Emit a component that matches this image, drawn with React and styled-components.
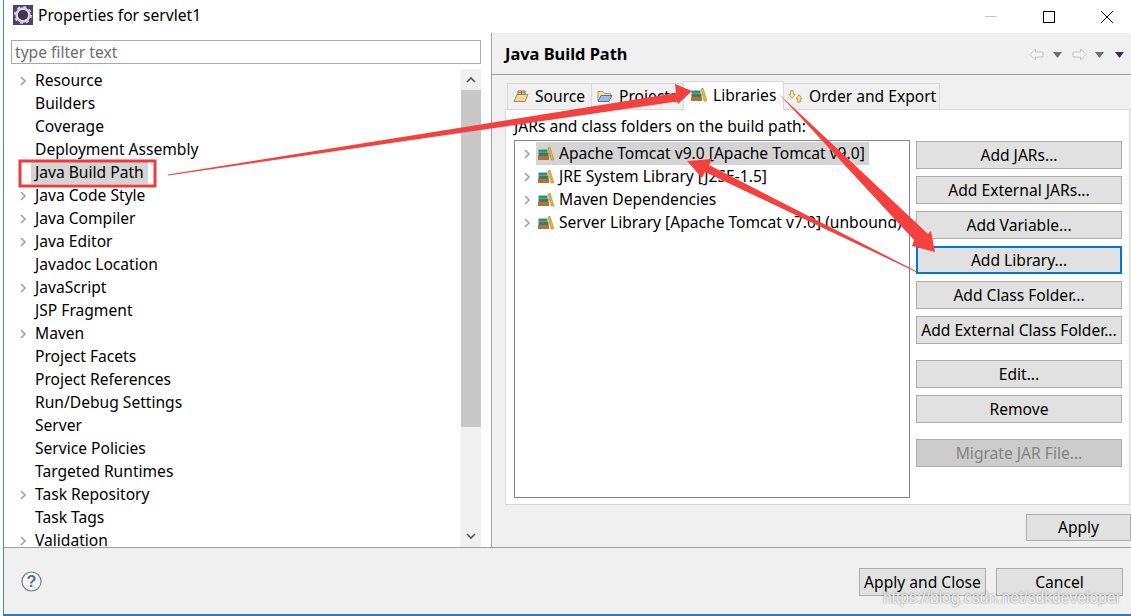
import React from 'react'
import styled, { createGlobalStyle } from 'styled-components'

const GlobalStyle = createGlobalStyle`
  html, body { margin: 0; padding: 0; background: #fff; overflow: hidden; }
  body { font-family: "Noto Sans", "Open Sans", sans-serif; font-size: 15.6px; color: #000; }
`

const Page = styled.div`
  position: relative;
  width: 1131px;
  height: 616px;
  padding-left: 3px;
  box-sizing: border-box;
  overflow: hidden;
`
const Window = styled.div`
  height: 616px;
  box-sizing: border-box;
  border-left: 1px solid #3d8cc4;
  border-bottom: 2px solid #2b7fc0;
  display: flex;
  flex-direction: column;
`
const TitleBar = styled.div`
  height: 33px;
  flex: none;
  display: flex;
  align-items: center;
  padding: 0 18px 4px 9px;
  box-sizing: border-box;
  background: #fff;
`
const TitleText = styled.div`
  margin-left: 5px;
  flex: 1;
`
const WinButtons = styled.div`
  display: flex;
  align-items: center;
  gap: 46px;
  padding-top: 4px;
`
const Main = styled.div`
  flex: 1;
  min-height: 0;
  display: flex;
`
const LeftPane = styled.div`
  width: 488px;
  flex: none;
  box-sizing: border-box;
  padding: 7px 10px 0 7px;
  display: flex;
  flex-direction: column;
  background: #fff;
  border-right: 1px solid #a0a0a0;
`
const FilterInput = styled.div`
  height: 24px;
  flex: none;
  box-sizing: border-box;
  border: 1px solid #a9a9a9;
  padding-left: 3px;
  line-height: 22px;
  color: #6d6d6d;
`
const TreeWrap = styled.div`
  flex: 1;
  min-height: 0;
  margin-top: 5px;
  display: flex;
  overflow: hidden;
`
const Tree = styled.div`
  flex: 1;
`
const TreeRow = styled.div`
  height: 23px;
  display: flex;
  align-items: center;
  padding-left: 9px;
`
const ChevronSlot = styled.div`
  width: 15px;
  flex: none;
  display: flex;
  align-items: center;
`
const RowLabel = styled.div`
  white-space: nowrap;
  line-height: 22px;
  padding: 0 4px 1px ${({ $selected }) => ($selected ? '4px' : '0')};
  margin-left: ${({ $selected }) => ($selected ? '-4px' : '0')};
  background: ${({ $selected }) => ($selected ? '#d4d4d4' : 'transparent')};
`
const Scrollbar = styled.div`
  width: 20px;
  flex: none;
  background: #f0f0f0;
  display: flex;
  flex-direction: column;
`
const ScrollArrow = styled.div`
  height: 21px;
  flex: none;
  display: flex;
  align-items: center;
  justify-content: center;
`
const ScrollThumb = styled.div`
  height: 337px;
  flex: none;
  background: #c8c8c8;
`
const ScrollGap = styled.div`
  flex: 1;
`
const RightPane = styled.div`
  flex: 1;
  min-width: 0;
  background: #f0f0f0;
  display: flex;
  flex-direction: column;
`
const Header = styled.div`
  height: 42px;
  flex: none;
  display: flex;
  align-items: center;
  justify-content: space-between;
  padding: 0 7px 0 13px;
  box-sizing: border-box;
  border-bottom: 1px solid #a0a0a0;
`
const HeaderTitle = styled.div`
  font-weight: 700;
  font-size: 16.4px;
`
const NavIcons = styled.div`
  display: flex;
  align-items: center;
  padding-top: 2px;
`
const TabBar = styled.div`
  height: 34px;
  flex: none;
  display: flex;
  align-items: flex-end;
  padding-left: 16px;
`
const Tab = styled.div`
  height: ${({ $active }) => ($active ? '29px' : '26px')};
  width: ${({ $w }) => $w}px;
  box-sizing: border-box;
  display: flex;
  align-items: center;
  padding: 0 0 ${({ $active }) => ($active ? '3px' : '1px')} ${({ $pad }) => $pad}px;
  gap: 6px;
  white-space: nowrap;
  background: ${({ $active }) => ($active ? '#fff' : '#f0f0f0')};
  border: 1px solid #d9d9d9;
  border-bottom: none;
  margin-left: -1px;
  margin-bottom: ${({ $active }) => ($active ? '-1px' : '0')};
  position: relative;
  z-index: ${({ $active }) => ($active ? 1 : 0)};
`
const Panel = styled.div`
  height: 396px;
  flex: none;
  margin: 0 1px 0 13px;
  box-sizing: border-box;
  background: #fff;
  border: 1px solid #d9d9d9;
  padding: 5px 7px 0 8px;
  display: flex;
  flex-direction: column;
`
const PanelLabel = styled.div`
  height: 25px;
  line-height: 22px;
  flex: none;
`
const PanelBody = styled.div`
  display: flex;
  gap: 6px;
  height: 358px;
`
const LibList = styled.div`
  width: 396px;
  flex: none;
  box-sizing: border-box;
  border: 1px solid #828790;
  padding: 1px 0 0 7px;
`
const LibRow = styled.div`
  height: 23px;
  display: flex;
  align-items: center;
`
const LibChevron = styled.div`
  width: 14px;
  flex: none;
  display: flex;
  align-items: center;
  padding-left: 2px;
  box-sizing: border-box;
`
const LibSelect = styled.div`
  display: flex;
  align-items: center;
  height: 23px;
  padding: 0 4px 0 2px;
  background: ${({ $selected }) => ($selected ? '#d4d4d4' : 'transparent')};
  white-space: nowrap;
`
const LibLabel = styled.span`
  margin-left: 5px;
  line-height: 22px;
  padding-bottom: 2px;
`
const ButtonColumn = styled.div`
  width: 206px;
  flex: none;
  display: flex;
  flex-direction: column;
  padding-top: 1px;
`
const Btn = styled.div`
  height: ${({ $h }) => $h ?? 28}px;
  flex: none;
  box-sizing: border-box;
  background: ${({ $disabled }) => ($disabled ? '#cccccc' : '#e1e1e1')};
  color: ${({ $disabled }) => ($disabled ? '#838383' : '#000')};
  border: ${({ $focus }) => ($focus ? '2px solid #0078d7' : '1px solid #adadad')};
  margin-top: ${({ $top }) => $top ?? 7}px;
  width: ${({ $w }) => ($w ? `${$w}px` : 'auto')};
  padding-bottom: 1px;
  display: flex;
  align-items: center;
  justify-content: center;
  white-space: nowrap;
`
const ApplyRow = styled.div`
  flex: none;
  display: flex;
  justify-content: flex-end;
  padding-top: 2px;
`
const Footer = styled.div`
  flex: none;
  height: 67px;
  box-sizing: border-box;
  background: #f0f0f0;
  border-top: 1px solid #a0a0a0;
  display: flex;
  align-items: flex-start;
  justify-content: space-between;
  padding: 20px 8px 0 16px;
`
const HelpSlot = styled.div`
  padding: 3px 0 0 1px;
`
const FooterButtons = styled.div`
  display: flex;
  gap: 10px;
`
const Watermark = styled.div`
  position: absolute;
  right: 10px;
  bottom: 9px;
  font-family: "Liberation Sans", sans-serif;
  font-size: 15.7px;
  line-height: 18px;
  color: rgba(255, 255, 255, 0.82);
  text-shadow: 0 0 2px rgba(70, 70, 70, 0.7);
`
const Annotations = styled.svg`
  position: absolute;
  left: 0;
  top: 0;
  z-index: 2;
  pointer-events: none;
`

const Chevron = () => (
  <svg width="7" height="10" viewBox="0 0 7 10">
    <path d="M1 1l4 4-4 4" fill="none" stroke="#a2a2a2" strokeWidth="1.6" />
  </svg>
)

const LibIcon = () => (
  <svg width="16" height="14" viewBox="0 0 16 14" style={{ flex: 'none' }}>
    <rect x="0.5" y="2.5" width="9" height="3" fill="#2f8f83" />
    <rect x="0.5" y="5.5" width="10" height="3.5" fill="#3d7f4e" />
    <rect x="0" y="9" width="11" height="4" fill="#b5703c" />
    <path d="M10 1l2-1 4 13h-3z" fill="#e7b23f" stroke="#a97d23" strokeWidth="0.5" />
  </svg>
)

const SourceIcon = () => (
  <svg width="16" height="14" viewBox="0 0 16 14" style={{ flex: 'none' }}>
    <path d="M1 12.5l3-7h11l-3 7z" fill="#f3d9a0" stroke="#a98550" />
    <path d="M5 5.5V2h7v3.5M8.5 2v3.5M5 3.8h7" fill="none" stroke="#8a6a3f" />
  </svg>
)

const FolderIcon = () => (
  <svg width="16" height="14" viewBox="0 0 16 14" style={{ flex: 'none' }}>
    <path d="M1 12V2.5h5l1.5 2h6V7" fill="#f5dea6" stroke="#b39a5c" />
    <path d="M1 12.5l3-6h11l-3 6z" fill="#9dbbe2" stroke="#4f77ab" />
  </svg>
)

const OrderIcon = () => (
  <svg width="15" height="15" viewBox="0 0 17 15" style={{ flex: 'none' }}>
    <path d="M3 1h3v4h2L4.500 9.500 1 5h2z" fill="#fbefc0" stroke="#b3923f" />
    <path d="M11 14h3v-4h2l-3.500-4.500L9 10h2z" fill="#fbe39a" stroke="#c09530" />
  </svg>
)

const GearIcon = () => (
  <svg width="20" height="20" viewBox="0 0 20 20" style={{ flex: 'none' }}>
    <rect width="20" height="20" fill="#4d3f75" />
    <circle cx="10" cy="10" r="6.400" fill="none" stroke="#d5d5da" strokeWidth="2.600" />
    <circle cx="10" cy="10" r="8" fill="none" stroke="#d5d5da" strokeWidth="2" strokeDasharray="3 3.300" />
    <circle cx="10" cy="10" r="4.800" fill="#3e3550" />
  </svg>
)

const NavArrow = ({ flip, m }) => (
  <svg width="15" height="13" viewBox="0 0 15 13" style={{ marginLeft: m, transform: flip ? 'scaleX(-1)' : 'none' }}>
    <path d="M6.500 1L1 6.500 6.500 12V9h7.500V4H6.500z" fill="#f4f4f4" stroke="#c4c4c4" />
  </svg>
)

const NavCaret = ({ color = '#6f6f6f', m }) => (
  <svg width="9" height="6" viewBox="0 0 9 6" style={{ marginLeft: m }}>
    <path d="M0 0h9L4.500 6z" fill={color} />
  </svg>
)

const HelpIcon = () => (
  <svg width="21" height="21" viewBox="0 0 22 22">
    <circle cx="11" cy="11" r="10" fill="#f6f7f9" stroke="#6c7c9b" strokeWidth="1.200" />
    <text x="11" y="17" textAnchor="middle" fontFamily="Liberation Sans" fontWeight="700" fontSize="17" fill="#5a6b8c">?</text>
  </svg>
)

const treeItems = [
  ['Resource', true], ['Builders'], ['Coverage'], ['Deployment Assembly'],
  ['Java Build Path', false, true], ['Java Code Style', true], ['Java Compiler', true],
  ['Java Editor', true], ['Javadoc Location'], ['JavaScript', true], ['JSP Fragment'],
  ['Maven', true], ['Project Facets'], ['Project References'], ['Run/Debug Settings'],
  ['Server'], ['Service Policies'], ['Targeted Runtimes'], ['Task Repository', true],
  ['Task Tags'], ['Validation', true],
]

const libs = [
  'Apache Tomcat v9.0 [Apache Tomcat v9.0]',
  'JRE System Library [J2SE-1.5]',
  'Maven Dependencies',
  'Server Library [Apache Tomcat v7.0] (unbound)',
]

const sideButtons = [
  { label: 'Add JARs...', top: 0 },
  { label: 'Add External JARs...' },
  { label: 'Add Variable...' },
  { label: 'Add Library...', focus: true },
  { label: 'Add Class Folder...' },
  { label: 'Add External Class Folder...' },
  { label: 'Edit...', top: 16 },
  { label: 'Remove' },
  { label: 'Migrate JAR File...', top: 16, disabled: true },
]

const App = () => {
  return (
    <Page>
      <GlobalStyle />
      <Window>
        <TitleBar>
          <GearIcon />
          <TitleText>Properties for servlet1</TitleText>
          <WinButtons>
            <svg width="12" height="12" viewBox="0 0 12 12"><path d="M0 5.500h12" stroke="#c8c8c8" /></svg>
            <svg width="12" height="12" viewBox="0 0 12 12"><rect x="0.500" y="0.500" width="11" height="11" fill="none" stroke="#000" /></svg>
            <svg width="12" height="12" viewBox="0 0 12 12"><path d="M0 0l12 12M12 0L0 12" stroke="#000" /></svg>
          </WinButtons>
        </TitleBar>
        <Main>
          <LeftPane>
            <FilterInput>type filter text</FilterInput>
            <TreeWrap>
              <Tree>
                {treeItems.map(([label, expandable, selected]) => (
                  <TreeRow key={label}>
                    <ChevronSlot>{expandable && <Chevron />}</ChevronSlot>
                    <RowLabel $selected={selected}>{label}</RowLabel>
                  </TreeRow>
                ))}
              </Tree>
              <Scrollbar>
                <ScrollArrow>
                  <svg width="10" height="7" viewBox="0 0 10 7"><path d="M1 6l4-4 4 4" fill="none" stroke="#555" strokeWidth="1.600" /></svg>
                </ScrollArrow>
                <ScrollThumb />
                <ScrollGap />
                <ScrollArrow>
                  <svg width="10" height="7" viewBox="0 0 10 7"><path d="M1 1l4 4 4-4" fill="none" stroke="#555" strokeWidth="1.600" /></svg>
                </ScrollArrow>
              </Scrollbar>
            </TreeWrap>
          </LeftPane>
          <RightPane>
            <Header>
              <HeaderTitle>Java Build Path</HeaderTitle>
              <NavIcons>
                <NavArrow />
                <NavCaret m="9px" />
                <NavArrow flip m="10px" />
                <NavCaret m="8px" />
                <NavCaret color="#3d2a66" m="11px" />
              </NavIcons>
            </Header>
            <TabBar>
              <Tab $w={85} $pad={5}><SourceIcon />Source</Tab>
              <Tab $w={93} $pad={5}><FolderIcon />Projects</Tab>
              <Tab $w={101} $pad={7} $active><LibIcon />Libraries</Tab>
              <Tab $w={157} $pad={4}><OrderIcon />Order and Export</Tab>
            </TabBar>
            <Panel>
              <PanelLabel>JARs and class folders on the build path:</PanelLabel>
              <PanelBody>
                <LibList>
                  {libs.map((lib, i) => (
                    <LibRow key={lib}>
                      <LibChevron><Chevron /></LibChevron>
                      <LibSelect $selected={i === 0}>
                        <LibIcon />
                        <LibLabel>{lib}</LibLabel>
                      </LibSelect>
                    </LibRow>
                  ))}
                </LibList>
                <ButtonColumn>
                  {sideButtons.map((b) => (
                    <Btn key={b.label} $top={b.top} $focus={b.focus} $disabled={b.disabled}>{b.label}</Btn>
                  ))}
                </ButtonColumn>
              </PanelBody>
            </Panel>
            <ApplyRow>
              <Btn $w={105} $h={27} $top={7}>Apply</Btn>
            </ApplyRow>
          </RightPane>
        </Main>
        <Footer>
          <HelpSlot><HelpIcon /></HelpSlot>
          <FooterButtons>
            <Btn $w={127} $top={0}>Apply and Close</Btn>
            <Btn $w={127} $top={0}>Cancel</Btn>
          </FooterButtons>
        </Footer>
      </Window>
      <Watermark>https://blog.csdn.net/sdkdeveloper</Watermark>
      <Annotations width="1131" height="616" viewBox="0 0 1131 616">
        <rect x="20" y="161" width="135" height="25" fill="none" stroke="#ee3b3b" strokeWidth="3" />
        <path d="M168 174.500L168 175.500L677 101.500L678 104L692 91L675 84L676 93z" fill="#f4403f" />
        <path d="M778 93L779 94L914 240L912 246L935 252L931 231L928 234z" fill="#f4403f" />
        <path d="M916 272L916 271L709 165L712 159L687 161L702 178L705 172z" fill="#f4403f" />
      </Annotations>
    </Page>
  )
}

export default App
